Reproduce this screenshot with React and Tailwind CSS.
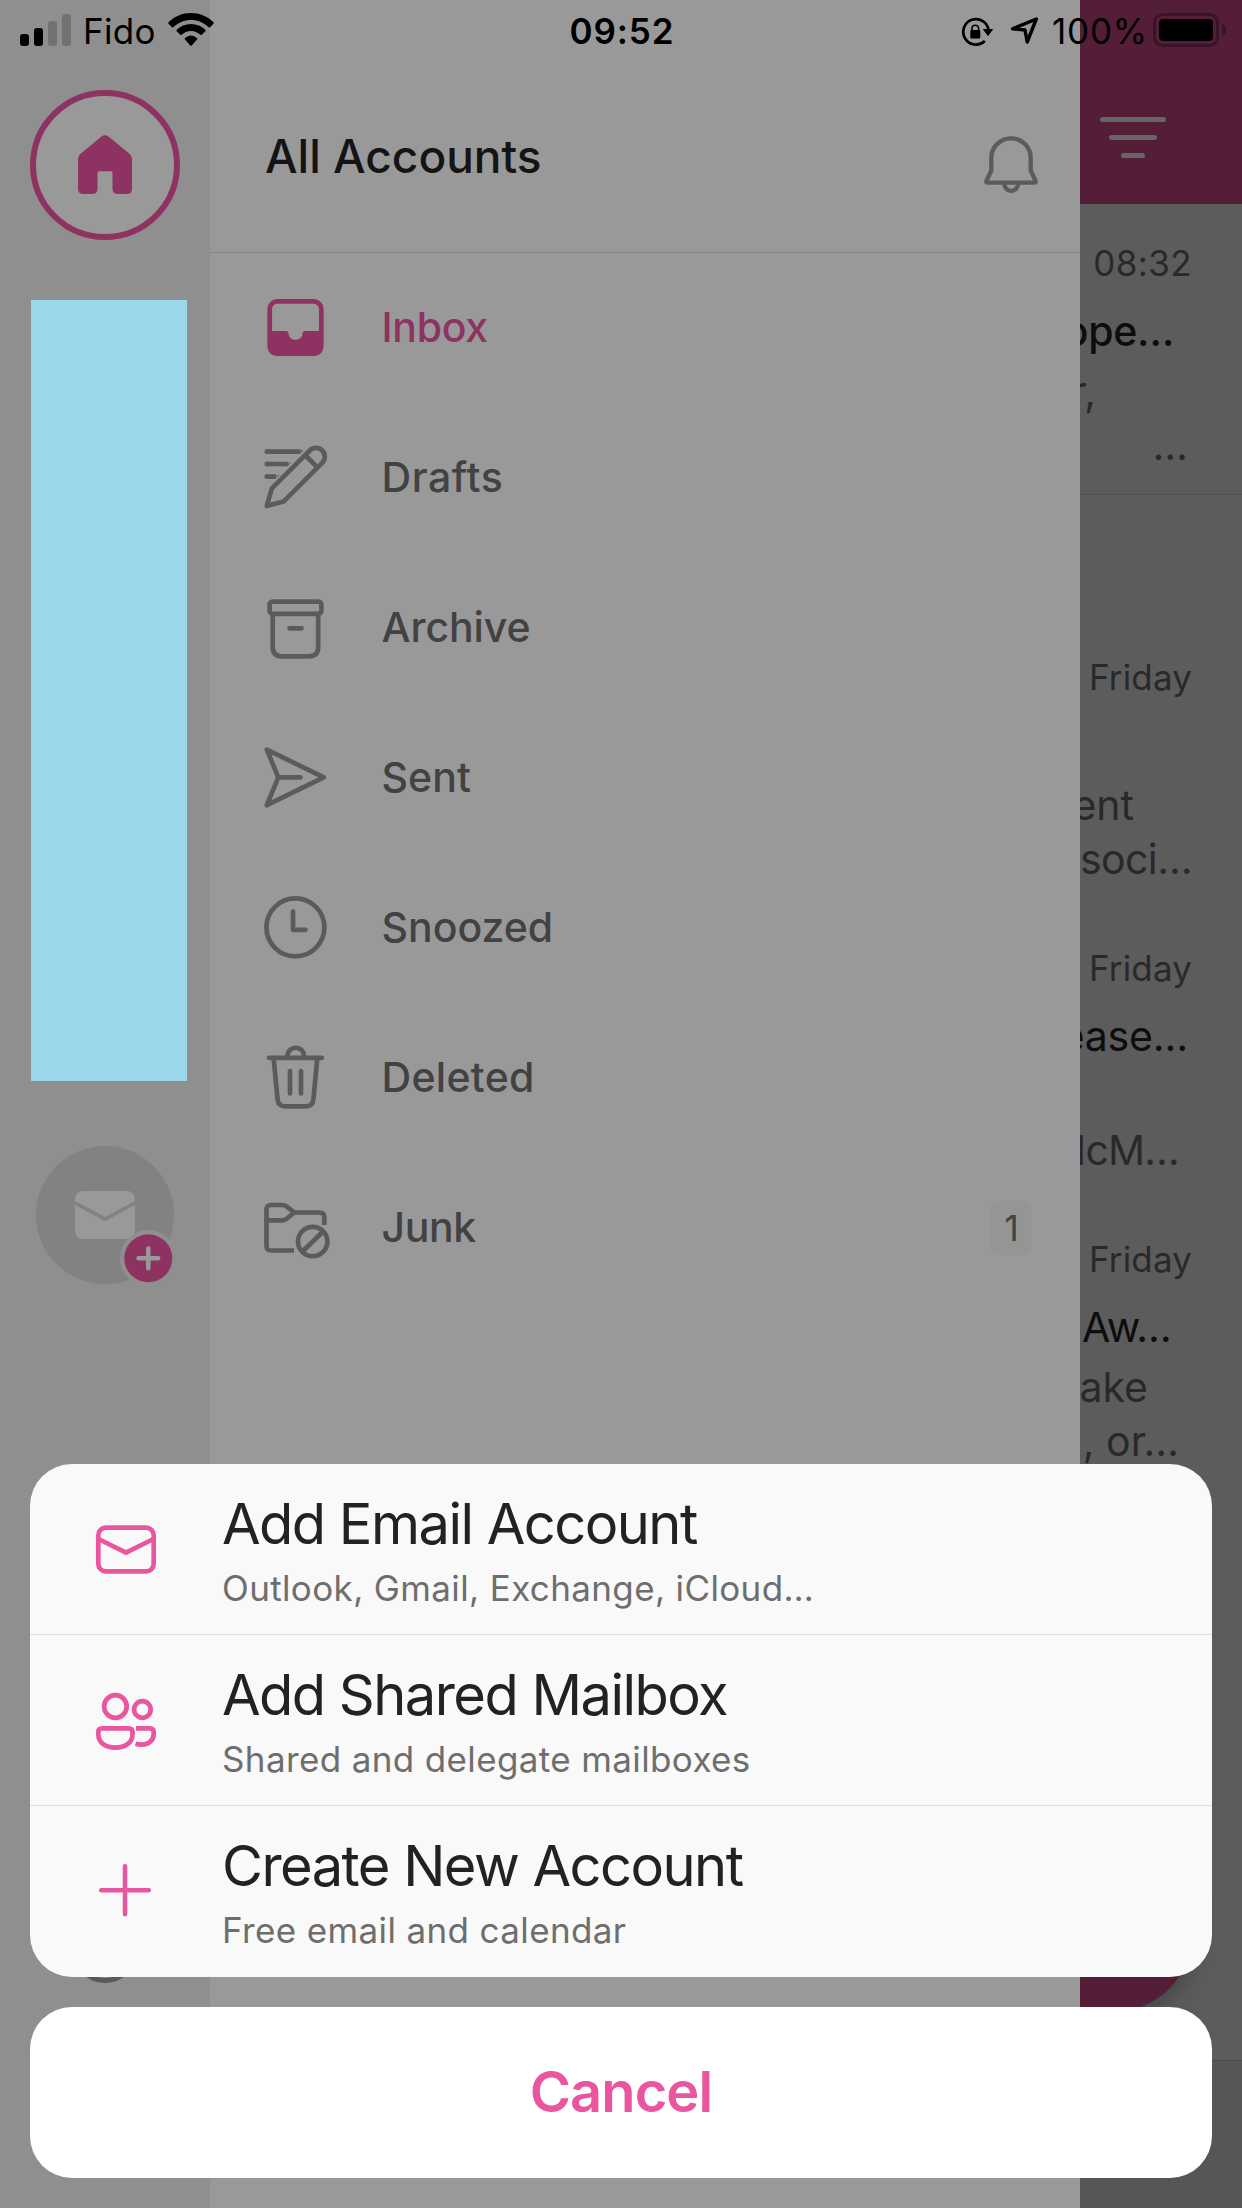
import React from "react";

const stroke = {
  fill: "none",
  stroke: "currentColor",
  strokeWidth: 4.7,
  strokeLinecap: "round",
  strokeLinejoin: "round",
};

function Icon({ children, className = "" }) {
  return (
    <svg viewBox="0 0 66 66" className={"h-[66px] w-[66px] shrink-0 overflow-visible " + className} {...stroke}>
      {children}
    </svg>
  );
}

const InboxIcon = () => (
  <Icon>
    <rect x="7.7" y="6.4" width="51.6" height="52.2" rx="7.5" />
    <path
      d="M6 36H24.5Q26.2 36 26.4 38A7 7 0 0 0 40.6 38Q40.8 36 42.5 36H61V52Q61 60.5 52.500 60.500H14.500Q6 60.500 6 52Z"
      fill="currentColor"
      stroke="none"
    />
  </Icon>
);

const DraftsIcon = () => (
  <Icon>
    <g strokeLinecap="butt">
      <path d="M4 6.700H38.500M4 19H26.500M4 31.700H14" />
    </g>
    <path d="M4.700 6.700H6M4.700 19H6M4.700 31.700H6" />
    <path d="M37 9.050H36L40.700 4.350V6ZM25 21.350H24L28.700 16.650V18ZM12 34.050H11.700L16.400 29.350V31Z" fill="currentColor" stroke="none" />
    <path d="M4.700 61 9.900 43.400 47.800 5.500A8.700 8.700 0 0 1 60.200 17.900L21.500 56.600Z" />
    <path d="M43.500 10.500 55 22" />
  </Icon>
);

const ArchiveIcon = () => (
  <Icon>
    <rect x="7.600" y="6.600" width="51.800" height="12.200" rx="3" />
    <path d="M10.700 19V52Q10.700 61.300 20 61.300H47Q56.200 61.300 56.200 52V19M27.500 33.300H39.500" />
  </Icon>
);

const SentIcon = () => (
  <Icon>
    <path d="M4.800 4.600 61.700 32.300 4.800 60.200 16.300 32.300ZM16.300 32.300H38.500" />
  </Icon>
);

const SnoozedIcon = () => (
  <Icon>
    <circle cx="33.400" cy="32.300" r="29" />
    <path d="M31 16.500V34.800H43.500" />
  </Icon>
);

const DeletedIcon = () => (
  <Icon>
    <path d="M7 12.800H60M25.500 12.500V11A8 8 0 0 1 42 11V12.500" />
    <path d="M11.600 13 15.600 54.500Q16.300 61.300 23 61.300H44Q50.700 61.300 51.400 54.500L55.300 13" />
    <path d="M28 26V48.500M39 26V48.500" />
  </Icon>
);

const JunkIcon = () => (
  <Icon>
    <path d="M32 55.500H9Q4.500 55.500 4.500 51V14.500Q4.500 10 9 10H20.500Q23 10 25 11.800L32.300 17.500H57.500Q62.300 17.500 62.300 22.300V30" strokeLinecap="butt" />
    <path d="M4.500 25.300H20.500Q23 25.300 25 23.500L32.300 17.500" />
    <circle cx="50.700" cy="46.500" r="14.700" />
    <path d="M41 56 60.500 37" />
  </Icon>
);

const BellIcon = () => (
  <Icon>
    <path d="M13.300 26A19.700 19.700 0 0 1 52.700 26V38.500L57.600 49Q58 50.600 56.500 50.600H9.500Q8 50.600 8.400 49L13.300 38.500Z" strokeWidth="4.300" />
    <path d="M26.300 51.500A6.900 7.500 0 0 0 40.100 51.500" strokeWidth="4.300" />
  </Icon>
);

const MailIcon = () => (
  <Icon>
    <rect x="5.300" y="11.700" width="55.400" height="43.600" rx="7.500" />
    <path d="M5.500 23 33 36.700 60.500 23" />
  </Icon>
);

const PeopleIcon = () => (
  <Icon>
    <circle cx="22.400" cy="19.500" r="11.300" />
    <circle cx="49.400" cy="22.500" r="8.300" />
    <path d="M5.300 45Q5.300 41.300 9.300 41.300H35.500Q39.500 41.300 39.500 45V47C39.500 56 32 60.700 22.400 60.700S5.300 56 5.300 47Z" />
    <path d="M43 41.300H56.500Q60.700 41.300 60.700 45V47C60.700 54 55 57.600 48.500 57.600Q45.500 57.600 42.500 56.800" strokeLinecap="butt" />
  </Icon>
);

const PlusIcon = () => (
  <Icon>
    <path d="M32 8.300V56.300M8.200 32.300H55.800" strokeWidth="4.500" />
  </Icon>
);

function StatusBar() {
  return (
    <header className="absolute inset-x-0 top-0 z-20 flex h-[60px] items-start text-black">
      <div className="flex flex-1 items-start pl-5">
        <div className="flex h-[46px] items-end gap-[5px]">
          <i className="h-3 w-[9px] rounded-[3px] bg-black" />
          <i className="h-[18px] w-[9px] rounded-[3px] bg-black" />
          <i className="h-[25px] w-[9px] rounded-[3px] bg-[#727272]" />
          <i className="h-8 w-[9px] rounded-[3px] bg-[#727272]" />
        </div>
        <span className="ml-[12px] mt-[11px] text-[35px] leading-[40px] tracking-[0.3px]">Fido</span>
        <svg viewBox="0 0 46 34" className="ml-3 mt-[13px] h-[34px] w-[46px]">
          <path d="M23 0C31.500 0 39.500 3.300 45.500 9.300Q46 10 45.500 10.700L42 14.200Q41.300 14.700 40.600 14.200C36 9.700 29.800 7 23 7S10 9.700 5.400 14.200Q4.700 14.700 4 14.200L.5 10.700Q0 10 .5 9.300C6.500 3.300 14.500 0 23 0Z" />
          <path d="M23 11C28.500 11 33.500 13.200 37.300 16.800Q37.900 17.500 37.300 18.200L33.700 21.800Q33 22.400 32.300 21.800C29.800 19.400 26.600 18 23 18S16.200 19.400 13.700 21.800Q13 22.400 12.300 21.800L8.700 18.200Q8.100 17.500 8.700 16.800C12.500 13.200 17.500 11 23 11Z" />
          <path d="M23 22.500Q26.300 22.500 29 25Q29.800 25.800 29 26.600L23.700 32.500Q23 33.200 22.300 32.500L17 26.600Q16.200 25.800 17 25Q19.700 22.500 23 22.500Z" />
        </svg>
      </div>
      <span className="mr-[3px] mt-[11px] text-[35px] font-semibold leading-[40px] tracking-[0.9px]">09:52</span>
      <div className="flex flex-1 items-start justify-end pr-[15px]">
        <svg viewBox="0 0 32 30" className="mt-[17px] h-[30px] w-8 shrink-0">
          <path d="M27.600 13.500A12.700 12.700 0 1 0 23.800 24" fill="none" stroke="black" strokeWidth="2.700" />
          <path d="M22.500 12.500H31.500L27 18.500Z" stroke="black" strokeLinejoin="round" />
          <rect x="9.300" y="13" width="10" height="8.500" rx="1" />
          <path d="M11 14V11.500A3.300 3.300 0 0 1 17.600 11.500V14" fill="none" stroke="black" strokeWidth="1.600" />
        </svg>
        <svg viewBox="0 0 30 30" className="ml-[17px] mt-4 h-[30px] w-[30px] shrink-0">
          <path d="M26.300 3 17.200 26 15 14 2.500 12.800Z" fill="none" stroke="black" strokeWidth="3.400" strokeLinejoin="round" />
        </svg>
        <span className="ml-[12px] mt-[11px] text-[35px] leading-[40px] tracking-[0.8px]">100%</span>
        <svg viewBox="0 0 74 34" className="ml-[5px] mt-[13px] h-[34px] w-[74px] shrink-0">
          <rect x="1.500" y="1.500" width="63" height="31" rx="8" fill="none" stroke="#381426" strokeWidth="3" />
          <rect x="6" y="6" width="54" height="22" rx="4" />
          <path d="M69 11Q73 12.500 73 17T69 23Z" fill="#381426" />
        </svg>
      </div>
    </header>
  );
}

function AccountRail() {
  return (
    <aside className="flex w-[210px] shrink-0 flex-col bg-[#8f8f8f]">
      <div className="ml-[30px] mt-[90px] flex h-[150px] w-[150px] items-center justify-center rounded-full border-[6px] border-[#8e3361] bg-[#999]">
        <svg viewBox="0 0 54 60" className="h-[60px] w-[54px] fill-[#8e3361]">
          <path d="M23.500 1.500Q27-1.200 30.500 1.500L51.500 18.700Q54 20.800 54 24V53.500Q54 59 48.500 59H40Q34.500 59 34.500 53.500V38Q34.500 36.300 33 36.300H21Q19.500 36.300 19.500 38V53.500Q19.500 59 14 59H5.500Q0 59 0 53.500V24Q0 20.800 2.500 18.700Z" />
        </svg>
      </div>
      <div className="ml-[31px] mt-[60px] h-[781px] w-[156px] bg-[#9ad8e9]" />
      <svg viewBox="0 0 138 138" className="ml-9 mt-[65px] h-[138px] w-[138px]">
        <circle cx="69" cy="69" r="69" fill="#828282" />
        <path d="M39 52.500V54Q39 45 48 45H90Q99 45 99 54V55L69 71 39 55Z" fill="#999" />
        <path d="M39 59 69 75.300 99 59V84Q99 93 90 93H48Q39 93 39 84Z" fill="#999" />
        <circle cx="112.300" cy="112.300" r="28.300" fill="#8f8f8f" />
        <circle cx="112.300" cy="112.300" r="24" fill="#8e3361" />
        <path d="M112.300 102.500V122.200M102.500 112.300H122.200" stroke="#999" strokeWidth="4.500" strokeLinecap="round" />
      </svg>
      <div className="ml-[72px] mt-[633px] h-[66px] w-[66px] rounded-full border-[5px] border-[#595959]" />
    </aside>
  );
}

const folders = [
  ["Inbox", InboxIcon, "tracking-[-0.3px]"],
  ["Drafts", DraftsIcon, "tracking-[0.6px]"],
  ["Archive", ArchiveIcon, "tracking-[-0.1px]"],
  ["Sent", SentIcon, "tracking-[0.1px]"],
  ["Snoozed", SnoozedIcon, "tracking-[0px]"],
  ["Deleted", DeletedIcon, "tracking-[0.3px]"],
  ["Junk", JunkIcon, "tracking-[-0.4px]"],
];

function FolderPanel() {
  return (
    <nav className="w-[870px] shrink-0 bg-[#999]">
      <div className="flex h-[253px] items-start justify-between border-b border-[#858585] pl-[55px] pr-9 pt-[132px]">
        <h1 className="text-[46px] font-medium leading-[48px] text-[#141414]">All Accounts</h1>
        <span className="text-[#5b5b5b]">
          <BellIcon />
        </span>
      </div>
      {folders.map(([name, Glyph, tracking], i) => (
        <div key={name} className="flex h-[150px] items-center pl-[52px] pr-12">
          <span className={i === 0 ? "text-[#8e3361]" : "text-[#5b5b5b]"}>
            <Glyph />
          </span>
          <span
            className={
              "ml-[53.5px] flex-1 pb-[2px] text-[41px] font-medium leading-[50px] " +
              tracking +
              (i === 0 ? " text-[#8e3361]" : " text-[#424242]")
            }
          >
            {name}
          </span>
          {name === "Junk" && (
            <span className="flex h-[55px] w-[41px] items-center justify-center rounded-[9px] bg-[#959595] text-[35px] text-[#424242]">
              1
            </span>
          )}
        </div>
      ))}
    </nav>
  );
}

function Message({ time, subject, first, second, border }) {
  return (
    <article className={"flex h-[291px] flex-col items-end pt-[39px] text-[41px] text-[#292929] " + (border ? "border-b border-[#505050]" : "")}>
      <time className={"mr-[50px] h-10 text-[35px] leading-[40px] " + (border ? "tracking-[0.4px]" : "tracking-[0.15px]")}>{time}</time>
      <p className={"mt-[18px] h-[60px] whitespace-nowrap leading-[60px] text-[#0d0d0d] " + subject[1]}>{subject[0]}</p>
      <p className={"mt-1 h-[53px] whitespace-nowrap leading-[53px] " + first[1]}>{first[0]}</p>
      <p className={"mt-px h-[53px] whitespace-nowrap leading-[53px] " + second[1]}>{second[0]}</p>
    </article>
  );
}

function MailList() {
  return (
    <main className="relative flex w-[162px] flex-col overflow-hidden bg-[#5c5c5c]">
      <div className="h-[204px] shrink-0 bg-[#541e38] pl-[19px] pt-[117px]">
        <div className="flex w-[67px] flex-col items-center gap-[13px]">
          <i className="h-[5px] w-[66px] rounded-full bg-[#666]" />
          <i className="h-[5px] w-12 rounded-full bg-[#666]" />
          <i className="h-[5px] w-6 rounded-full bg-[#666]" />
        </div>
      </div>
      <div className="h-[1857px] shrink-0 overflow-hidden border-b border-[#4b4b4b]">
        <Message border time="08:32" subject={["ope…", "mr-[68px] font-medium tracking-[-0.3px]"]} first={["r,", "mr-[146px]"]} second={["…", "mr-[54px]"]} />
        <div className="h-[123px]" />
        <Message time="Friday" subject={["", ""]} first={["ent", "mr-[108px]"]} second={["soci…", "mr-[50px] tracking-[-0.6px]"]} />
        <Message time="Friday" subject={["ease…", "mr-[54px] tracking-[-0.2px]"]} first={["", ""]} second={["McM…", "mr-[63px] tracking-[-0.8px]"]} />
        <Message time="Friday" subject={["Aw…", "mr-[71px] tracking-[-0.8px]"]} first={["ake", "mr-[94px]"]} second={[", or…", "mr-[63px]"]} />
      </div>
      <div className="flex-1 bg-[#565656]" />
      <div className="absolute left-[-54px] top-[1845px] h-[168px] w-[168px] rounded-full bg-[#541e38] shadow-[0_6px_24px_rgba(0,0,0,0.3)]" />
    </main>
  );
}

const actions = [
  ["Add Email Account", "Outlook, Gmail, Exchange, iCloud…", MailIcon],
  ["Add Shared Mailbox", "Shared and delegate mailboxes", PeopleIcon],
  ["Create New Account", "Free email and calendar", PlusIcon],
];

function ActionSheet() {
  return (
    <section className="absolute inset-x-[30px] bottom-[30px] z-10 flex flex-col gap-[30px]">
      <div className="h-[513px] overflow-hidden rounded-[42px] bg-[#f9f9f9]">
        {actions.map(([title, detail, Glyph], i) => (
          <button
            key={title}
            className={"flex h-[171px] w-full items-start pl-[63px] text-left " + (i < 2 ? "border-b border-[#dfdfdf]" : "")}
          >
            <span className="mt-[52px] text-[#ea55a0]">
              <Glyph />
            </span>
            <span className="ml-[63px] flex flex-col pt-[27px]">
              <span className="h-[66px] text-[56px] leading-[66px] tracking-[-1.53px] text-[#222]">{title}</span>
              <span className="mt-[9px] text-[35px] leading-[44px] tracking-[0.37px] text-[#6e6e6e]">{detail}</span>
            </span>
          </button>
        ))}
      </div>
      <button className="h-[171px] rounded-[42px] bg-white text-[56px] font-semibold leading-[171px] tracking-[-0.9px] text-[#ea55a0]">Cancel</button>
    </section>
  );
}

export default function App() {
  return (
    <div className="relative h-[2208px] w-[1242px] overflow-hidden font-['Inter',sans-serif]">
      <StatusBar />
      <div className="flex h-full">
        <AccountRail />
        <FolderPanel />
        <MailList />
      </div>
      <ActionSheet />
    </div>
  );
}
